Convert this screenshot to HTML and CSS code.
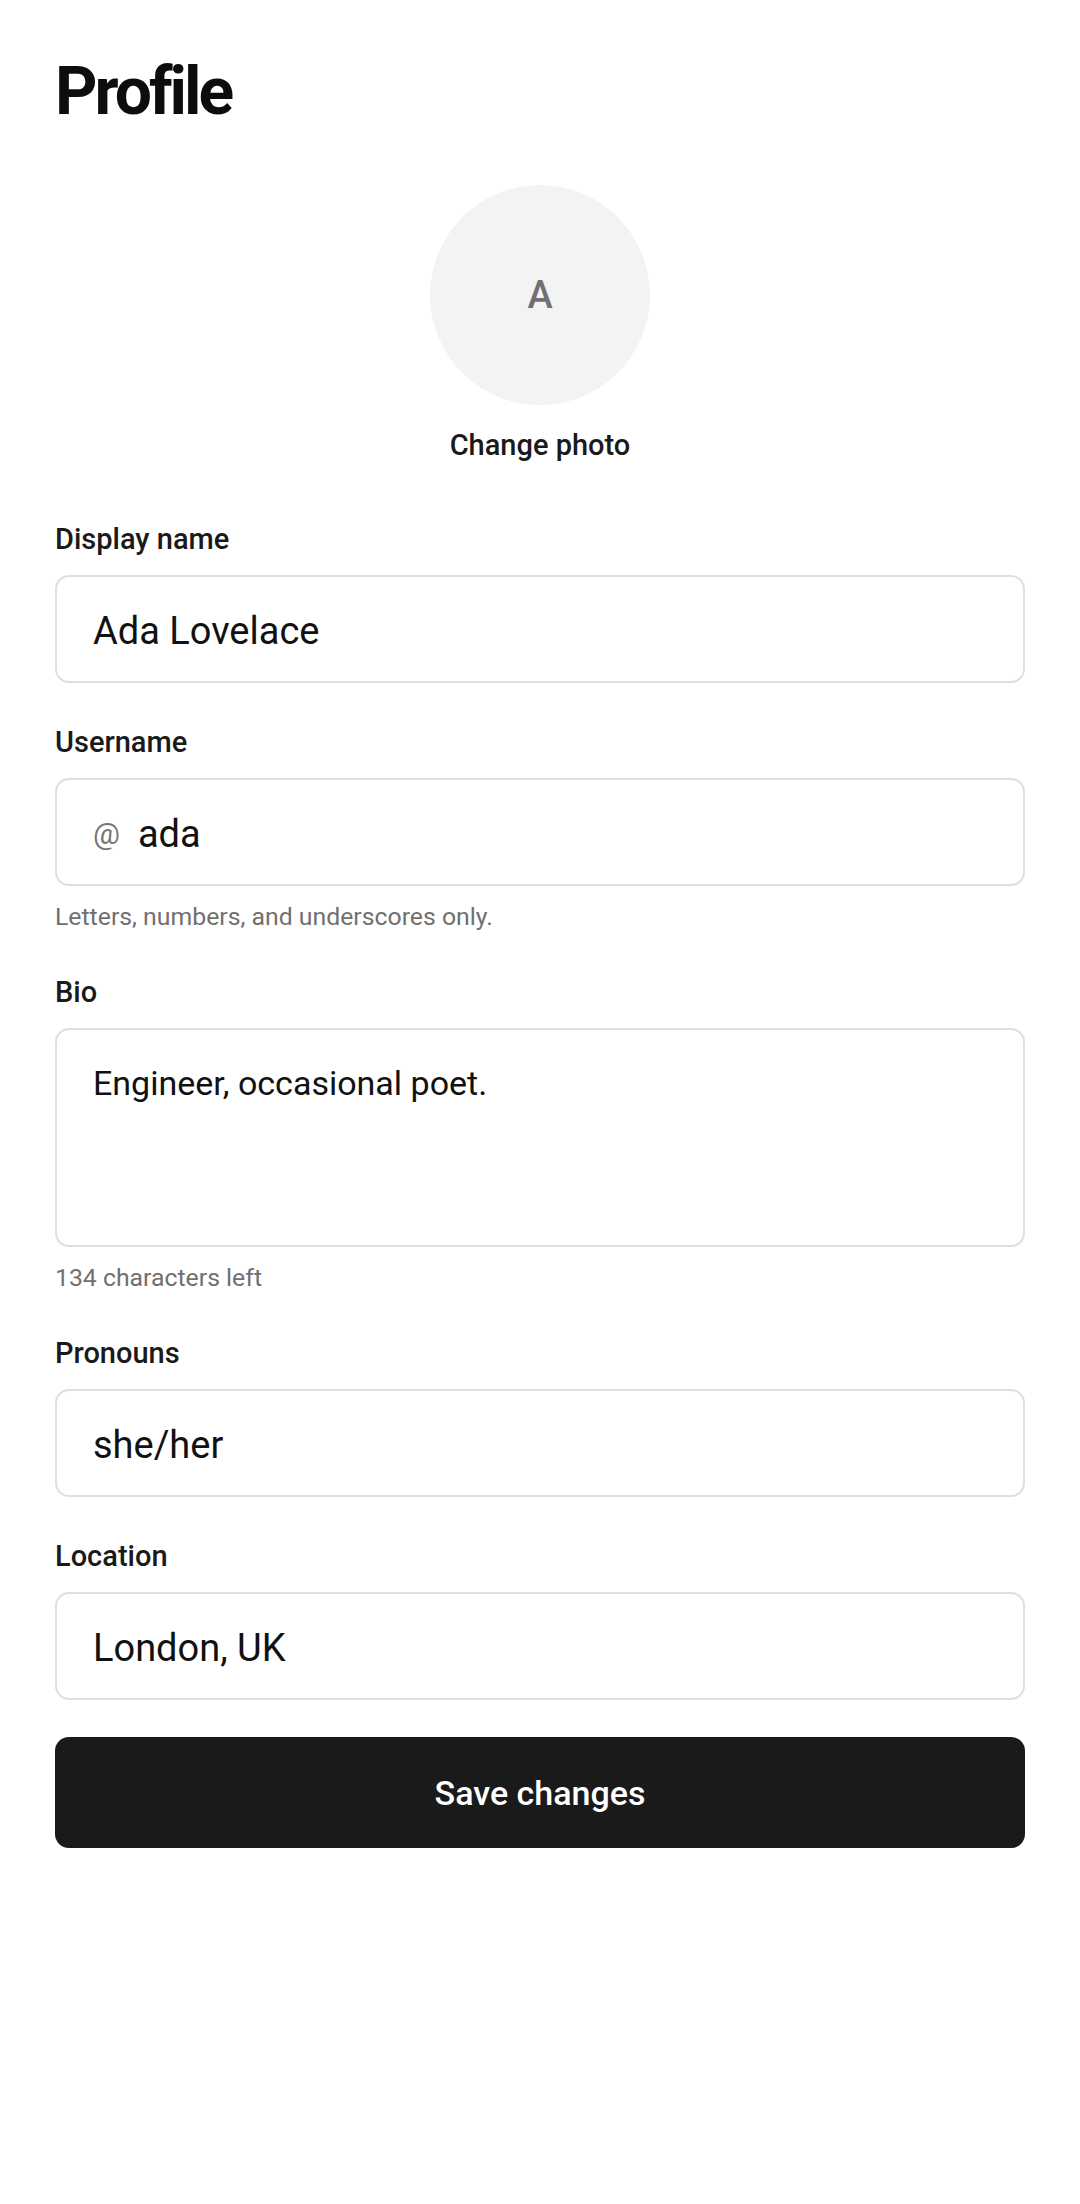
FILE: index.html
```html
<!DOCTYPE html>
<html lang="en">
<head>
    <meta charset="UTF-8">
    <meta name="viewport" content="width=device-width, initial-scale=1.0">
    <title>Profile</title>
    <link rel="stylesheet" href="styles.css">
</head>
<body>
    <div class="page">
        <h1>Profile</h1>

        <div class="photo">
            <div class="avatar">A</div>
            <button type="button" class="change-photo">Change photo</button>
        </div>

        <form id="profileForm">
            <div class="fields">
                <div class="field">
                    <label for="displayName">Display name</label>
                    <input type="text" id="displayName" value="Ada Lovelace">
                </div>
                <div class="field">
                    <label for="username">Username</label>
                    <div class="input-wrap">
                        <span class="prefix">@</span>
                        <input type="text" id="username" value="ada">
                    </div>
                    <p class="hint">Letters, numbers, and underscores only.</p>
                </div>
                <div class="field">
                    <label for="bio">Bio</label>
                    <textarea id="bio">Engineer, occasional poet.</textarea>
                    <p class="hint">134 characters left</p>
                </div>
                <div class="field">
                    <label for="pronouns">Pronouns</label>
                    <input type="text" id="pronouns" value="she/her">
                </div>
                <div class="field">
                    <label for="location">Location</label>
                    <input type="text" id="location" value="London, UK">
                </div>
            </div>
            <button type="button" class="save">Save changes</button>
        </form>
    </div>
</body>
</html>
```

FILE: styles.css
```css
body {
    margin: 0;
    font-family: Roboto, "Noto Sans", sans-serif;
    background: #ffffff;
    color: #111111;
}
.page {
    padding: 52px 55px;
}
h1 {
    margin: 0;
    font-size: 66px;
    line-height: 80px;
    font-weight: 700;
    letter-spacing: -3px;
    color: #0d0d0d;
}
.photo {
    margin-top: 53px;
    display: flex;
    flex-direction: column;
    align-items: center;
}
.avatar {
    width: 220px;
    height: 220px;
    border-radius: 50%;
    background: #f3f3f3;
    color: #707070;
    font-size: 38px;
    font-weight: 500;
    display: flex;
    justify-content: center;
    align-items: center;
}
.change-photo {
    margin-top: 22px;
    padding: 0;
    border: none;
    background: none;
    font-family: inherit;
    font-size: 29px;
    line-height: 36px;
    font-weight: 500;
    color: #1a1a1a;
    cursor: pointer;
}
form {
    margin-top: 58px;
}
.fields {
    display: flex;
    flex-direction: column;
    gap: 41px;
}
.field label {
    display: block;
    font-size: 29px;
    line-height: 36px;
    font-weight: 500;
    color: #1a1a1a;
    margin-bottom: 18px;
}
.field input,
.field textarea,
.input-wrap {
    box-sizing: border-box;
    width: 100%;
    border: 2px solid #dfdfdf;
    border-radius: 14px;
    background: #fff;
    font-family: inherit;
    font-size: 38px;
    color: #111111;
    outline: none;
}
.field input {
    display: block;
    height: 108px;
    padding: 3px 36px 0;
}
.input-wrap {
    display: flex;
    align-items: center;
    height: 108px;
    padding: 3px 36px 0;
}
.input-wrap .prefix {
    font-size: 30px;
    color: #777777;
    margin-right: 18px;
}
.input-wrap input {
    flex: 1;
    border: none;
    border-radius: 0;
    height: auto;
    padding: 0;
}
.field textarea {
    display: block;
    height: 219px;
    padding: 29px 36px;
    font-size: 34px;
    line-height: 48px;
    resize: none;
}
.hint {
    margin: 15px 0 0;
    font-size: 24.8px;
    line-height: 32px;
    color: #707070;
}
.save {
    display: block;
    width: 100%;
    height: 111px;
    margin-top: 37px;
    border: none;
    border-radius: 14px;
    background: #1a1a1a;
    color: #ffffff;
    font-family: inherit;
    font-size: 34px;
    font-weight: 500;
    cursor: pointer;
}
```
